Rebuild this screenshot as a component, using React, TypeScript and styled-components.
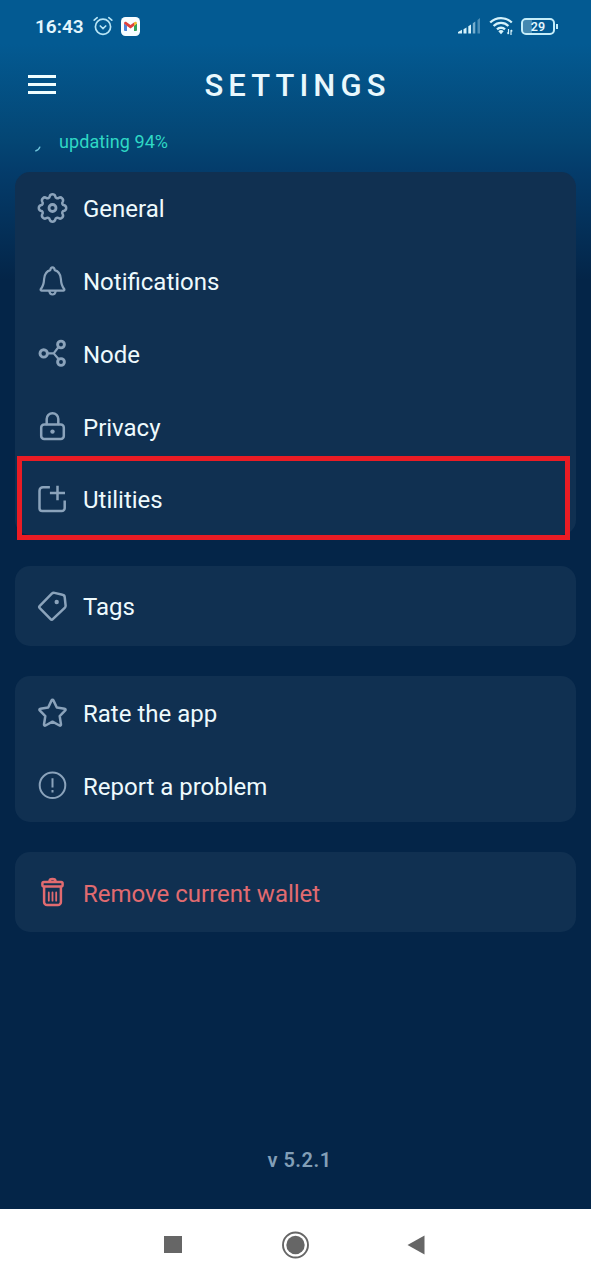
import React from "react";
import styled, { createGlobalStyle } from "styled-components";

const GlobalStyle = createGlobalStyle`
  *, *::before, *::after { box-sizing: border-box; }
  body { margin: 0; font-family: Roboto, "Liberation Sans", sans-serif; background: #042548; }
`;

const Screen = styled.div`
  display: flex;
  flex-direction: column;
  width: 591px;
  height: 1280px;
  overflow: hidden;
  background: linear-gradient(180deg, #035a92 0, #035a92 44px, #044674 140px, #043c6b 171px, #042548 280px);
`;

const StatusBar = styled.div`
  display: flex;
  align-items: center;
  justify-content: space-between;
  height: 52px;
  padding: 0 33px 0 35px;
  color: #e3f6fd;
`;

const StatusGroup = styled.div<{ $gap: number }>`
  display: flex;
  align-items: center;
  gap: ${(p) => p.$gap}px;
`;

const Clock = styled.span`
  font-size: 19px;
  font-weight: 600;
  line-height: 24px;
  width: 49px;
  white-space: nowrap;
  padding-top: 1px;
  margin-right: 1px;
`;

const Header = styled.header`
  display: grid;
  grid-template-columns: 56px 1fr 56px;
  align-items: center;
  height: 66px;
`;

const MenuButton = styled.button`
  display: flex;
  flex-direction: column;
  gap: 5px;
  width: 56px;
  height: 21px;
  padding: 0 0 0 28px;
  border: 0;
  background: none;
`;

const MenuLine = styled.span`
  width: 28px;
  height: 3px;
  background: #f0feff;
`;

const Title = styled.h1`
  margin: 0;
  text-align: center;
  font-size: 31px;
  font-weight: 500;
  line-height: 36px;
  letter-spacing: 5.1px;
  text-indent: 4px;
  padding-top: 1px;
  color: #e9f8fd;
`;

const SyncStatus = styled.div`
  display: flex;
  align-items: center;
  height: 48px;
  padding-left: 34px;
  gap: 17px;
  color: #2fd8c5;
  font-size: 18px;
  line-height: 22px;
  letter-spacing: 0.08px;
`;

const Sections = styled.main`
  display: flex;
  flex-direction: column;
  gap: 30.5px;
  flex: 1;
  padding: 5.5px 15px 0;
`;

const Card = styled.section<{ $single?: boolean }>`
  padding: ${(p) => (p.$single ? "3.5px 0" : "0")};
  border-radius: 15px;
  background: #103051;
`;

const Row = styled.div<{ $danger?: boolean }>`
  position: relative;
  display: flex;
  align-items: center;
  gap: 15px;
  height: 72.8px;
  padding: 0 0 0 22px;
  color: ${(p) => (p.$danger ? "#e16b70" : "#8ba3bb")};
`;

const Label = styled.span<{ $danger?: boolean }>`
  font-size: 24px;
  line-height: 30px;
  padding-top: 2.8px;
  white-space: nowrap;
  color: ${(p) => (p.$danger ? "#e16b70" : "#eefafd")};
`;

const Highlight = styled.div`
  position: absolute;
  top: -6.8px;
  left: 2px;
  width: 553px;
  height: 84px;
  border: 5px solid #ea1c24;
`;

const Version = styled.footer`
  height: 61px;
  text-align: center;
  font-size: 20px;
  font-weight: 600;
  line-height: 24px;
  letter-spacing: 0.5px;
  padding-left: 8px;
  color: #829fb7;
`;

const NavBar = styled.nav`
  display: flex;
  align-items: center;
  justify-content: space-between;
  height: 71px;
  padding: 0 165px 0 162px;
  background: #fff;
`;

// Eight rounded teeth: an outward arc per tooth, then an inward arc to the next one.
const gearPath = (() => {
  const at = (degrees: number) => {
    const a = (degrees * Math.PI) / 180;
    return `${(15 + 12 * Math.sin(a)).toFixed(2)} ${(15 - 12 * Math.cos(a)).toFixed(2)}`;
  };
  let d = `M${at(-13.5)}`;
  for (let tooth = 0; tooth < 8; tooth++) {
    const center = tooth * 45;
    d += `A2.95 2.95 0 0 1 ${at(center + 13.5)}A2.1 2.1 0 0 0 ${at(center + 31.5)}`;
  }
  return `${d}Z`;
})();

const Icon = ({ children, width = 2.5 }: { children: React.ReactNode; width?: number }) => (
  <svg width="31" height="30" viewBox="-0.5 0 31 30" fill="none" stroke="currentColor" strokeWidth={width} strokeLinecap="round" strokeLinejoin="round">
    {children}
  </svg>
);

const GearIcon = () => (
  <Icon>
    <path d={gearPath} />
    <circle cx="15" cy="15" r="3.5" strokeWidth="2.8" />
  </Icon>
);

const BellIcon = () => (
  <Icon width={2.2}>
    <path d="M4 24.6C3 24.6 2.8 23.6 3.5 22.7 6.3 19.5 6.3 17.5 6.6 13 7 7.8 9.5 5 12.8 4.1 13 2.3 13.7 1.4 15 1.4s2 .9 2.2 2.7C20.5 5 23 7.8 23.4 13c.3 4.5.3 6.5 3.1 9.7.7.9.5 1.900-.5 1.900Z" />
    <path d="M11.8 25.2c.3 2.2 1.5 3.3 3.2 3.3s2.9-1.1 3.2-3.3" />
  </Icon>
);

const NodeIcon = () => (
  <Icon width={2.9}>
    <circle cx="6.2" cy="15.4" r="3.7" />
    <circle cx="23.5" cy="6.5" r="3.4" />
    <circle cx="23.5" cy="24" r="3.4" />
    <path strokeWidth="2.2" d="M10 15.4h6.2L21 9M16.2 15.4 21 21" />
  </Icon>
);

const LockIcon = () => (
  <Icon>
    <rect x="3.7" y="13.4" width="22.6" height="14.6" rx="3" />
    <path d="M9.200 12.900V8a5.800 5.800 0 0 1 11.600 0v4.900" />
    <circle cx="15" cy="20.6" r="2.2" fill="currentColor" stroke="none" />
  </Icon>
);

const UtilitiesIcon = () => (
  <Icon>
    <path strokeLinecap="butt" d="M12.400 3.200H5.500a3.500 3.500 0 0 0-3.500 3.500v17.500a2.800 2.800 0 0 0 2.800 2.800h19.400a3 3 0 0 0 3-3v-7.500" />
    <path strokeLinecap="butt" d="M12.400 9.100h15.100M20 1.800v14.500" />
  </Icon>
);

const TagIcon = () => (
  <Icon>
    <path d="M14.300 2.700 2.300 14.800a1.700 1.700 0 0 0 0 2.400l10.800 11a1.500 1.500 0 0 0 2.200 0L27.200 16.800a3 3 0 0 0 .9-2.500l-.9-8.200a2.600 2.600 0 0 0-2.200-2.300L17 1.900a3 3 0 0 0-2.700.8Z" />
    <circle cx="19.2" cy="11" r="2.2" fill="currentColor" stroke="none" />
  </Icon>
);

const StarIcon = () => (
  <Icon>
    <path d="m15.900 2.400 3.400 7.100 7.900 1.200c.9.100 1.200 1 .6 1.600l-5.600 5.800 1.300 8.400c.1.900-.7 1.400-1.500 1L15 23.700l-7 3.800c-.8.400-1.600-.1-1.500-1l1.300-8.400-5.600-5.800c-.6-.6-.3-1.500.6-1.600l7.900-1.200 3.400-7.100c.4-.8 1.400-.8 1.800 0Z" />
  </Icon>
);

const AlertIcon = () => (
  <Icon width={2}>
    <circle cx="15" cy="15.3" r="12.8" />
    <path strokeLinecap="butt" d="M15 8.300v9.300M15 20.100v2.300" />
  </Icon>
);

const TrashIcon = () => (
  <Icon>
    <path d="M12 4.300a3 2.200 0 0 1 6 0" />
    <rect x="4.900" y="5" width="20.200" height="4.400" rx="1.500" />
    <path d="M6.600 10v14.900a3 3 0 0 0 3 3h10.800a3 3 0 0 0 3-3V10" />
    <path strokeWidth="1.8" d="M11.300 15.500v8.200M15 15.500v8.200M18.700 15.500v8.200" />
  </Icon>
);

const AlarmIcon = () => (
  <svg width="20" height="20" viewBox="0 0 20 20" fill="none" stroke="#b6e4f5" strokeWidth="1.7" strokeLinecap="round">
    <circle cx="10" cy="10.8" r="7.6" />
    <path d="m7.300 10 2.700 2.500 2.700-2.500M1.200 4.100 4.200 1.700M18.800 4.100l-3-2.400" />
  </svg>
);

const MailIcon = () => (
  <svg width="19" height="19" viewBox="0 0 19 19">
    <rect width="19" height="19" rx="4.5" fill="#f8fdff" />
    <path d="M3 6.500 6 8.500V14H4a1 1 0 0 1-1-1Z" fill="#4c83d8" />
    <path d="m13 8.500 3-2V13a1 1 0 0 1-1 1h-2Z" fill="#35a45a" />
    <path d="M3 6.500C3 4.800 4.600 4.400 5.700 5.200L9.500 8l3.800-2.800v3.500L9.500 11.500 6 8.900Z" fill="#df3f3b" />
    <path d="M13 5.400c1.400-1 3-.6 3 1.100l-3 2.400Z" fill="#efb92f" />
  </svg>
);

const SignalIcon = () => (
  <svg width="23" height="18" viewBox="0 0 23 18" fill="#d5f2fb">
    <path d="M0 16.500v-1.500L4 12.800v3.700Z" />
    <path d="M5.500 12.200 8.500 10.500v6h-3Z" />
    <path d="M10.300 9.300 13 7.500v9h-2.700Z" />
    <path d="M14.800 6.300 17.300 4.500v12h-2.500Z" opacity=".55" />
    <path d="M19.500 3 22 1v15.500h-2.500Z" opacity=".35" />
  </svg>
);

const WifiIcon = () => (
  <svg width="24" height="20" viewBox="0 0 24 20" fill="none" stroke="#d5f2fb" strokeWidth="2.3">
    <path d="M1.200 6.500a15.400 15.400 0 0 1 21.600 0M4.600 10a10.500 10.500 0 0 1 14.800 0M8 13.400a5.700 5.700 0 0 1 8 0" />
    <path d="M9.300 15.300a4 4 0 0 1 5.400 0L12 18.300Z" fill="#d5f2fb" stroke="none" />
    <path strokeWidth="1.2" d="M19.500 13v5M22 14v5M18.300 16.500l1.200 1.700M23.300 15.300 22 13.800" />
  </svg>
);

const Battery = styled.span`
  position: relative;
  display: flex;
  align-items: center;
  justify-content: center;
  width: 34px;
  height: 17px;
  margin-right: 3px;
  border: 2px solid #c5edf9;
  border-radius: 5px;
  background: linear-gradient(90deg, #4488b0 9px, transparent 9px);
  background-clip: padding-box;
  font-size: 12.5px;
  font-weight: 600;
  line-height: 13px;

  &::after {
    content: "";
    position: absolute;
    right: -5px;
    top: 4px;
    width: 2px;
    height: 5px;
    background: #c5edf9;
  }
`;

const SpinnerIcon = () => (
  <svg width="8" height="8" viewBox="0 0 8 8" fill="none" stroke="#6fc5dc" strokeWidth="1.4">
    <path d="M1.300 7C3.500 6.500 5.300 4.900 6 2.600" />
  </svg>
);

const SpinnerSlot = styled.span`
  display: flex;
  padding-top: 12px;
`;

type Item = { label: string; icon: React.FC; highlighted?: boolean; danger?: boolean };

const groups: Item[][] = [
  [
    { label: "General", icon: GearIcon },
    { label: "Notifications", icon: BellIcon },
    { label: "Node", icon: NodeIcon },
    { label: "Privacy", icon: LockIcon },
    { label: "Utilities", icon: UtilitiesIcon, highlighted: true },
  ],
  [{ label: "Tags", icon: TagIcon }],
  [
    { label: "Rate the app", icon: StarIcon },
    { label: "Report a problem", icon: AlertIcon },
  ],
  [{ label: "Remove current wallet", icon: TrashIcon, danger: true }],
];

export default function App() {
  return (
    <>
      <GlobalStyle />
      <Screen>
        <StatusBar>
          <StatusGroup $gap={8}>
            <Clock>16:43</Clock>
            <AlarmIcon />
            <MailIcon />
          </StatusGroup>
          <StatusGroup $gap={8}>
            <SignalIcon />
            <WifiIcon />
            <Battery>29</Battery>
          </StatusGroup>
        </StatusBar>
        <Header>
          <MenuButton aria-label="Menu">
            <MenuLine />
            <MenuLine />
            <MenuLine />
          </MenuButton>
          <Title>SETTINGS</Title>
        </Header>
        <SyncStatus>
          <SpinnerSlot>
            <SpinnerIcon />
          </SpinnerSlot>
          updating 94%
        </SyncStatus>
        <Sections>
          {groups.map((items) => (
            <Card key={items[0].label} $single={items.length === 1}>
              {items.map(({ label, icon: Glyph, highlighted, danger }) => (
                <Row key={label} $danger={danger}>
                  <Glyph />
                  <Label $danger={danger}>{label}</Label>
                  {highlighted && <Highlight />}
                </Row>
              ))}
            </Card>
          ))}
        </Sections>
        <Version>v 5.2.1</Version>
        <NavBar>
          <svg width="21" height="21" viewBox="0 0 21 21">
            <rect x="2" y="2" width="18" height="17" fill="#666" />
          </svg>
          <svg width="28" height="28" viewBox="0 0 28 28">
            <circle cx="14.5" cy="14" r="12.5" fill="none" stroke="#666" strokeWidth="1.9" />
            <circle cx="14.5" cy="14" r="9.2" fill="#666" />
          </svg>
          <svg width="20" height="22" viewBox="0 0 20 22">
            <path d="M18.500 1.500v19L1.500 11Z" fill="#666" />
          </svg>
        </NavBar>
      </Screen>
    </>
  );
}
